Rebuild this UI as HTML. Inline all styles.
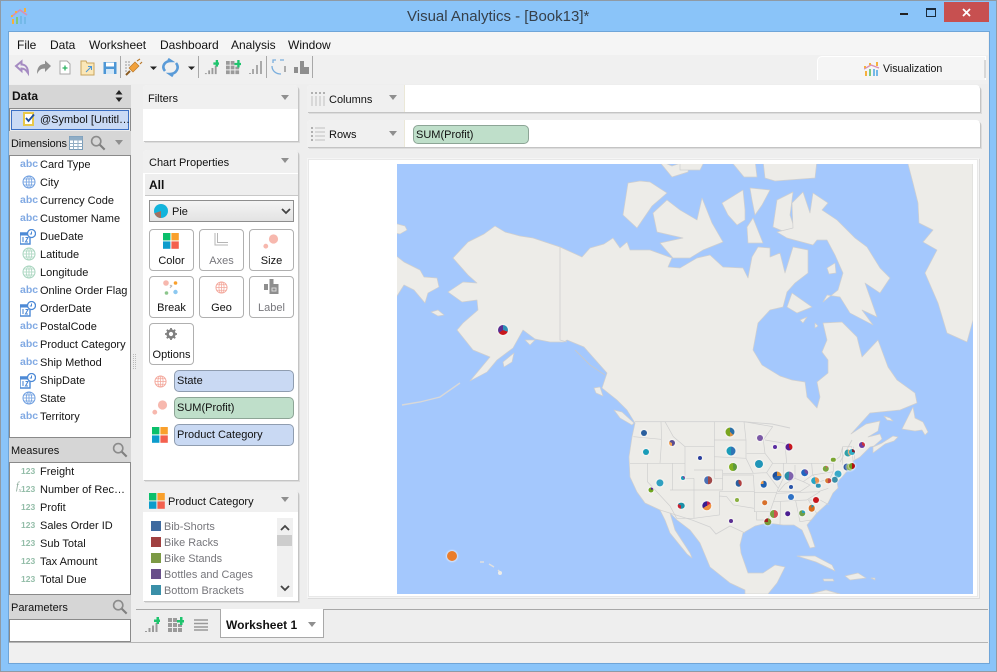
<!DOCTYPE html>
<html><head><meta charset="utf-8"><title>Visual Analytics</title>
<style>
html,body{margin:0;padding:0;width:997px;height:672px;overflow:hidden;background:#8ac4f9}
body{position:relative;font:12px/16px "Liberation Sans",sans-serif;color:#111}
div,span,svg,b.p{position:absolute}
.t{white-space:nowrap}
.hd{background:#d6d6d6}
.list{background:#fff;border:1px solid #8a8a8a;box-sizing:border-box}
.r{position:absolute;left:40px;height:18px;line-height:18px;margin-top:1px;font-size:11px;white-space:nowrap;color:#141414}
.abc{position:absolute;left:20px;color:#80a9e3;font-size:10.5px;font-weight:bold;height:18px;line-height:18px;white-space:nowrap}
.n{position:absolute;left:21px;color:#93bda8;font-size:8.5px;font-weight:bold;height:18px;line-height:18px;white-space:nowrap}
.card{background:#fff;box-shadow:1px 1px 0 #c4c4c4,2px 2px 0 #dcdcdc;border-radius:4px 4px 0 0}
.chd{background:#f0f0f0;border-radius:4px 4px 0 0}
.tri{width:0;height:0;border-left:4.5px solid transparent;border-right:4.5px solid transparent;border-top:5px solid #8f8f8f}
.btn{width:43px;height:40px;background:#fff;border:1px solid #b0b0b0;border-radius:4px;text-align:center;font-size:11px}
.btn span{left:0;right:0;top:23px;text-align:center}
.pill{left:174px;width:118px;height:20px;border:1px solid #8f9db0;border-radius:5px;line-height:21px;font-size:11px;text-indent:2px;white-space:nowrap}
.blue{background:#c9d9f3}.grn{background:#bfdfca;border-color:#8da596}
.sw{left:151px;width:10px;height:10px}
.lg{left:164px;font-size:10.9px;color:#77777c;white-space:nowrap;margin-top:1px}
.h{font-size:11px}
.p{position:absolute;display:block;border-radius:50%;transform:translate(-50%,-50%);box-shadow:0 0 1.5px 1px rgba(255,255,255,.55)}
.sep{width:1px;height:22px;top:56px;background:#a8a8a8}
</style></head>
<body>
<svg width="0" height="0" style="position:absolute"><defs>
<symbol id="globe" viewBox="0 0 14 14"><circle cx="7" cy="7" r="6" fill="none" stroke="currentColor"/><ellipse cx="7" cy="7" rx="2.8" ry="6" fill="none" stroke="currentColor" stroke-width=".8"/><path d="M1 7H13M2 4H12M2 10H12M7 1V13" stroke="currentColor" stroke-width=".8" fill="none"/></symbol>
<symbol id="date" viewBox="0 0 16 16"><path d="M0 4H10V15H0Z" fill="#fff" stroke="#4d8ad6" stroke-width="1.4"/><path d="M0 4H10V6.5H0Z" fill="#4d8ad6"/><path d="M3 8V13M5.5 8.5H8L5.5 13H8" stroke="#4d8ad6" stroke-width="1.1" fill="none"/><circle cx="11.5" cy="4.5" r="4" fill="#fff" stroke="#4d8ad6" stroke-width="1.3"/><path d="M11.5 2.5V5H9.8" stroke="#4d8ad6" fill="none"/></symbol>
<symbol id="four" viewBox="0 0 16 16"><rect width="7.4" height="7.4" fill="#0bbf6b"/><rect x="8.4" width="7.4" height="7.4" fill="#f9a02c"/><rect y="8.4" width="7.4" height="7.4" fill="#0d9ccc"/><rect x="8.4" y="8.4" width="7.4" height="7.4" fill="#f4604e"/></symbol>
<symbol id="mag" viewBox="0 0 18 18"><circle cx="7" cy="7" r="5.2" fill="none" stroke="#8b8b8b" stroke-width="1.8"/><path d="M11 11L16.5 16.5" stroke="#7f7f7f" stroke-width="2.4"/></symbol>
<symbol id="size" viewBox="0 0 16 16"><circle cx="10.5" cy="5" r="4.6" fill="#f7b8ae"/><circle cx="2.8" cy="12.2" r="2.4" fill="#f7b8ae"/></symbol>
<symbol id="barsp" viewBox="0 0 16 16"><path d="M1 14h2v1H1zM4.500 11h2v4h-2zM8 8.500h2V15H8zM11.500 6h2v9h-2z" fill="#9a9a9a"/><path d="M10 2.500h2.500V0h2.500v2.500h1V5h-1v2h-2.500V5H10z" fill="#1fc46e"/></symbol>
<symbol id="gridp" viewBox="0 0 16 16"><path d="M0 1h4v4H0zM5 1h4v4H5zM0 6h4v4H0zM5 6h4v4H5zM0 11h4v4H0zM5 11h4v4H5zM10 11h4v4h-4zM10 7h4v3h-4z" fill="#9a9a9a"/><path d="M9 3h3V0h2.500v3H17v2.500h-2.500V8H12V5.500H9z" fill="#1fc46e"/></symbol>
</defs></svg>

<!-- window chrome -->
<div style="left:0;top:0;width:995px;height:670px;border:1px solid #8f9aa5"></div>
<svg style="left:10px;top:7px" width="18" height="18" viewBox="0 0 18 18"><path d="M1 10L6 6L10 3L17 8" stroke="#d98fb5" stroke-width="1.6" fill="none"/><path d="M1 8h2v2H1zM5 4h2v2H5zM14 1h2v4h-2z" fill="#f5b13d"/><path d="M2 12h2v5H2z" fill="#f5b13d"/><path d="M6 10h2v7H6z" fill="#7fc97f"/><path d="M10 9h2v8h-2z" fill="#74b9e8"/><path d="M14 10h2v7h-2z" fill="#74b9e8"/></svg>
<div class="t" style="left:407px;top:7px;font-size:15px;line-height:20px;color:#36404a">Visual Analytics - [Book13]*</div>
<div style="left:900px;top:13px;width:8px;height:2px;background:#222"></div>
<div style="left:926px;top:8px;width:8px;height:6px;border:1px solid #1a2a3a;border-top:2px solid #1a2a3a"></div>
<div style="left:944px;top:2px;width:45px;height:20px;background:#c75050"></div>
<svg style="left:962px;top:8px" width="9" height="9"><path d="M1 1L8 8M8 1L1 8" stroke="#fff" stroke-width="1.8"/></svg>

<div style="left:8px;top:31px;width:980px;height:631px;border:1px solid #6fa5d8;background:#eee;box-sizing:content-box"></div>
<div style="left:9px;top:32px;width:979px;height:23px;background:#f5f5f5"></div>
<div style="left:9px;top:55px;width:979px;height:29px;background:#f0f0f0"></div>
<div class="t" style="left:17px;top:37px;font-size:12px">File</div>
<div class="t" style="left:50px;top:37px;font-size:12px">Data</div>
<div class="t" style="left:89px;top:37px;font-size:12px">Worksheet</div>
<div class="t" style="left:160px;top:37px;font-size:12px">Dashboard</div>
<div class="t" style="left:231px;top:37px;font-size:12px">Analysis</div>
<div class="t" style="left:288px;top:37px;font-size:12px">Window</div>

<!-- toolbar -->
<svg style="left:13px;top:58px" width="310" height="20" viewBox="0 0 310 20">
<path d="M3 8L8.500 3.500V6.500C12 6.500 15 9 15 15C13 12 11.500 10.500 8.500 10.500V13Z" fill="none" stroke="#a58bc2" stroke-width="2"/>
<path d="M38 8L32 2.500V6C28 6 24 8 24 16C26 12 28 10.500 32 10.500V14Z" fill="#8f8f8f"/>
<path d="M47 3h7l3 3v10H47z" fill="#fff" stroke="#a9a9a9"/><path d="M49.500 10h5M52 7.500v5" stroke="#2bb260" stroke-width="1.300"/>
<path d="M68 5V3h5l1 2h7v12H68z" fill="#fbe7b8" stroke="#c9a45c"/><path d="M73 14L78 9M75 8.500h3.500V12" stroke="#4a95d8" fill="none"/>
<path d="M90.500 4h13v12h-13z" fill="#4d97d6"/><path d="M93 4.500h8v4h-8z" fill="#fff"/><path d="M93 11h8v5h-8z" fill="#d5e8f7"/>
<path d="M113 3v12M116 3v6" stroke="#9a9a9a" stroke-dasharray="2 1"/><path d="M113 17L117 13" stroke="#8a5a20" stroke-width="2"/><path d="M116 10L122 4L126 8L120 14Z" fill="#f2a23c" stroke="#b8782a" stroke-width=".7"/><path d="M124 3L127 1M127 6L129 4" stroke="#b8782a" stroke-width="1.200"/>
<path d="M137 8.500h7l-3.500 3.500z" fill="#222"/>
<path d="M152 13C148 8 152 3 158 3L155 1M163 5C167 10 163 16 157 16L160 18" fill="none" stroke="#5a9bd8" stroke-width="2.600"/>
<path d="M175 8.500h7l-3.500 3.500z" fill="#222"/>
<use href="#barsp" x="191" y="2" width="15" height="15"/>
<use href="#gridp" x="213" y="2" width="15" height="15"/>
<path d="M236 15h2v1h-2zM239 11h2v5h-2zM243 7h2v9h-2zM247 3h2v13h-2z" fill="#a9a9a9"/>
<path d="M260 5V2h3M267 2h4M259 8c0 5 4 8 9 8" fill="none" stroke="#7aaedd" stroke-width="1.300"/><path d="M272 8v6" stroke="#888" stroke-width="1.300"/>
<path d="M281 9h4v6h-4zM287 3h4v6h5v7h-9z" fill="#8e8e8e"/>
</svg>
<div class="sep" style="left:120px"></div><div class="sep" style="left:198px"></div><div class="sep" style="left:266px"></div><div class="sep" style="left:312px"></div>

<!-- visualization tab -->
<div style="left:817px;top:56px;width:167px;height:23px;background:#f5f5f5;border:1px solid #fff;border-bottom:0;border-radius:5px 0 0 0"></div>
<div style="left:984px;top:60px;width:2px;height:18px;background:#d8d8d8"></div>
<svg style="left:864px;top:62px" width="16" height="14" viewBox="0 0 16 14"><path d="M0 7L7 3L15 6" stroke="#d98fb5" stroke-width="1.400" fill="none"/><path d="M0 4h2v2H0zM5 1h2v2H5zM12 0h2v4h-2zM1 9h2v5H1z" fill="#f5b13d"/><path d="M5 7h2v7H5z" fill="#7fc97f"/><path d="M9 7h2v7H9zM12 8h2v6h-2z" fill="#74b9e8"/></svg>
<div class="t" style="left:883px;top:61px;font-size:10.6px">Visualization</div>

<!-- left panel -->
<div style="left:9px;top:85px;width:122px;height:23px;background:#d6d6d6"></div>
<div class="t" style="left:12px;top:88px;font-weight:bold;font-size:12px">Data</div>
<svg style="left:115px;top:90px" width="8" height="12"><path d="M4 0L7.500 4.500H.5zM4 12L.5 7.500H7.500z" fill="#222"/></svg>
<div style="left:9px;top:108px;width:120px;height:22px;border:1px solid #8a8a8a;background:#eee"></div>
<div style="left:11px;top:110px;width:116px;height:18px;background:#c9daf5;border:1px solid #3a6fc4"></div>
<svg style="left:23px;top:112px" width="13" height="14"><path d="M1 1h9v12H1z" fill="#fff" stroke="#e8c84a" stroke-width="2"/><path d="M3 6l2.500 3L11 2.500" stroke="#1e4f9c" stroke-width="1.800" fill="none"/></svg>
<div class="t" style="left:40px;top:112px;font-size:11px">@Symbol [Untitl…</div>

<div class="hd" style="left:9px;top:131px;width:122px;height:24px"></div>
<div class="t" style="left:11px;top:136px;font-size:10.9px;letter-spacing:-.1px">Dimensions</div>
<svg style="left:69px;top:136px" width="14" height="14"><path d="M.5 .5h13v13H.5z" fill="#fff" stroke="#7a9cb8"/><path d="M.5 4h13M.5 7.500h13M.5 10.500h13M4.500 .5v13M9 .5v13" stroke="#93aec4"/><path d="M.5 .5h13v3H.5z" fill="#8fadc6"/></svg>
<svg style="left:90px;top:135px" width="16" height="16"><use href="#mag" width="16" height="16"/></svg>
<div class="tri" style="left:115px;top:140px"></div>

<div class="list" style="left:9px;top:155px;width:122px;height:283px"></div>
<div style="left:0;top:0">
<span class="abc" style="top:155px">abc</span><span class="r" style="top:155px">Card Type</span>
<svg style="left:22px;top:175px;color:#6e9ee0" width="14" height="14"><use href="#globe" width="14" height="14"/></svg><span class="r" style="top:173px">City</span>
<span class="abc" style="top:191px">abc</span><span class="r" style="top:191px">Currency Code</span>
<span class="abc" style="top:209px">abc</span><span class="r" style="top:209px">Customer Name</span>
<svg style="left:20px;top:229px" width="16" height="16"><use href="#date" width="16" height="16"/></svg><span class="r" style="top:227px">DueDate</span>
<svg style="left:22px;top:247px;color:#a8d5bf" width="14" height="14"><use href="#globe" width="14" height="14"/></svg><span class="r" style="top:245px">Latitude</span>
<svg style="left:22px;top:265px;color:#a8d5bf" width="14" height="14"><use href="#globe" width="14" height="14"/></svg><span class="r" style="top:263px">Longitude</span>
<span class="abc" style="top:281px">abc</span><span class="r" style="top:281px">Online Order Flag</span>
<svg style="left:20px;top:301px" width="16" height="16"><use href="#date" width="16" height="16"/></svg><span class="r" style="top:299px">OrderDate</span>
<span class="abc" style="top:317px">abc</span><span class="r" style="top:317px">PostalCode</span>
<span class="abc" style="top:335px">abc</span><span class="r" style="top:335px">Product Category</span>
<span class="abc" style="top:353px">abc</span><span class="r" style="top:353px">Ship Method</span>
<svg style="left:20px;top:373px" width="16" height="16"><use href="#date" width="16" height="16"/></svg><span class="r" style="top:371px">ShipDate</span>
<svg style="left:22px;top:391px;color:#6e9ee0" width="14" height="14"><use href="#globe" width="14" height="14"/></svg><span class="r" style="top:389px">State</span>
<span class="abc" style="top:407px">abc</span><span class="r" style="top:407px">Territory</span>
</div>

<div class="hd" style="left:9px;top:438px;width:122px;height:24px"></div>
<div class="t h" style="left:11px;top:443px">Measures</div>
<svg style="left:112px;top:442px" width="16" height="16"><use href="#mag" width="16" height="16"/></svg>
<div class="list" style="left:9px;top:462px;width:122px;height:133px"></div>
<div style="left:0;top:0">
<span class="n" style="top:462px">123</span><span class="r" style="top:462px">Freight</span>
<span class="n" style="top:480px">123</span><span class="r" style="top:480px">Number of Rec…</span>
<span class="t" style="left:16px;top:480px;font:italic 10px/14px 'Liberation Serif',serif;color:#8aa898">f<sub style="font-size:6px">x</sub></span>
<span class="n" style="top:498px">123</span><span class="r" style="top:498px">Profit</span>
<span class="n" style="top:516px">123</span><span class="r" style="top:516px">Sales Order ID</span>
<span class="n" style="top:534px">123</span><span class="r" style="top:534px">Sub Total</span>
<span class="n" style="top:552px">123</span><span class="r" style="top:552px">Tax Amount</span>
<span class="n" style="top:570px">123</span><span class="r" style="top:570px">Total Due</span>
</div>
<div class="hd" style="left:9px;top:595px;width:122px;height:24px"></div>
<div class="t h" style="left:11px;top:600px">Parameters</div>
<svg style="left:112px;top:599px" width="16" height="16"><use href="#mag" width="16" height="16"/></svg>
<div class="list" style="left:9px;top:619px;width:122px;height:23px"></div>
<svg style="left:133px;top:354px" width="3" height="16"><path d="M.5 0v16M2.500 0v16" stroke="#bbb" stroke-dasharray="1 1"/></svg>

<!-- filters -->
<div class="card" style="left:143px;top:85px;width:155px;height:56px"></div>
<div class="chd" style="left:143px;top:85px;width:155px;height:24px"></div>
<div class="t h" style="left:148px;top:91px">Filters</div>
<div class="tri" style="left:281px;top:95px"></div>

<!-- chart properties -->
<div class="card" style="left:143px;top:150px;width:155px;height:330px"></div>
<div class="chd" style="left:143px;top:150px;width:155px;height:23px"></div>
<div class="t h" style="left:149px;top:155px">Chart Properties</div>
<div class="tri" style="left:281px;top:158px"></div>
<div style="left:145px;top:174px;width:153px;height:21px;background:#eee;border-bottom:1px solid #c8c8c8"></div>
<div class="t" style="left:149px;top:177px;font-weight:bold;font-size:12px">All</div>
<div style="left:149px;top:200px;width:143px;height:20px;border:1px solid #8e8e8e;background:linear-gradient(#f4f4f4,#e3e3e3)"></div>
<svg style="left:154px;top:204px" width="14" height="14"><circle cx="7" cy="7" r="7" fill="#12b4dc"/><path d="M7 7V14A7 7 0 0 1 .4 9.300Z" fill="#a3705f"/></svg>
<div class="t" style="left:172px;top:204px;font-size:11px">Pie</div>
<svg style="left:281px;top:208px" width="10" height="7"><path d="M1 1L5 5L9 1" stroke="#444" stroke-width="1.800" fill="none"/></svg>

<div class="btn" style="left:149px;top:229px"><span>Color</span></div>
<svg style="left:163px;top:233px" width="16" height="16"><use href="#four" width="16" height="16"/></svg>
<div class="btn" style="left:199px;top:229px;color:#77777c"><span>Axes</span></div>
<svg style="left:214px;top:233px" width="14" height="14"><path d="M1 0V12H14M3.500 0V9.500H14" stroke="#b5b5b5" fill="none"/></svg>
<div class="btn" style="left:249px;top:229px"><span>Size</span></div>
<svg style="left:263px;top:234px" width="16" height="16"><use href="#size" width="16" height="16"/></svg>

<div class="btn" style="left:149px;top:276px"><span>Break</span></div>
<svg style="left:163px;top:280px" width="16" height="16"><circle cx="3" cy="3" r="2.800" fill="#f7b8ae"/><circle cx="12.500" cy="3" r="1.800" fill="#f9a02c"/><circle cx="3.500" cy="13" r="1.800" fill="#8cc68c"/><circle cx="12.500" cy="12" r="2.200" fill="#8cc8f0"/><path d="M7 5l2 2M9 5l-2 3" stroke="#bbb"/></svg>
<div class="btn" style="left:199px;top:276px"><span>Geo</span></div>
<svg style="left:215px;top:281px;color:#f3a79b" width="13" height="13"><use href="#globe" width="13" height="13"/></svg>
<div class="btn" style="left:249px;top:276px;color:#77777c"><span>Label</span></div>
<svg style="left:264px;top:279px" width="15" height="15"><path d="M0 5h4v6H0zM5.500 0h4v5h5v10h-9z" fill="#8e8e8e"/><path d="M8 9h4v3H8z" fill="none" stroke="#d8d8d8"/></svg>

<div class="btn" style="left:149px;top:323px"><span>Options</span></div>
<svg style="left:165px;top:328px" width="12" height="12" viewBox="0 0 12 12"><circle cx="6" cy="6" r="3.400" fill="none" stroke="#808080" stroke-width="2.600"/><path d="M6 0v2.500M6 9.500V12M0 6h2.500M9.500 6H12M1.800 1.800l1.800 1.800M8.400 8.400l1.800 1.800M1.800 10.200l1.800-1.800M8.400 3.600l1.800-1.800" stroke="#808080" stroke-width="1.800"/></svg>

<svg style="left:154px;top:375px;color:#f3a79b" width="13" height="13"><use href="#globe" width="13" height="13"/></svg>
<div class="pill blue" style="top:370px">State</div>
<svg style="left:152px;top:400px" width="16" height="16"><use href="#size" width="16" height="16"/></svg>
<div class="pill grn" style="top:397px">SUM(Profit)</div>
<svg style="left:152px;top:427px" width="16" height="16"><use href="#four" width="16" height="16"/></svg>
<div class="pill blue" style="top:424px">Product Category</div>

<!-- legend -->
<div class="card" style="left:143px;top:490px;width:155px;height:111px"></div>
<div class="chd" style="left:143px;top:490px;width:155px;height:22px"></div>
<svg style="left:149px;top:493px" width="16" height="16"><use href="#four" width="16" height="16"/></svg>
<div class="t h" style="left:168px;top:494px">Product Category</div>
<div class="tri" style="left:281px;top:497px"></div>
<div class="sw" style="top:521px;background:#3f6a9f"></div><div class="lg" style="top:518px">Bib-Shorts</div>
<div class="sw" style="top:537px;background:#a04040"></div><div class="lg" style="top:534px">Bike Racks</div>
<div class="sw" style="top:553px;background:#7c9a45"></div><div class="lg" style="top:550px">Bike Stands</div>
<div class="sw" style="top:569px;background:#684f8a"></div><div class="lg" style="top:566px">Bottles and Cages</div>
<div class="sw" style="top:585px;background:#3a8fa8"></div><div class="lg" style="top:582px">Bottom Brackets</div>
<div style="left:277px;top:518px;width:16px;height:79px;background:#f0f0f0"></div>
<div style="left:277px;top:535px;width:15px;height:11px;background:#cdcdcd"></div>
<svg style="left:280px;top:524px" width="10" height="7"><path d="M1 6L5 2L9 6" stroke="#444" stroke-width="1.800" fill="none"/></svg>
<svg style="left:280px;top:585px" width="10" height="7"><path d="M1 1L5 5L9 1" stroke="#444" stroke-width="1.800" fill="none"/></svg>

<!-- shelves -->
<div class="card" style="left:307px;top:85px;width:673px;height:27px"></div>
<div style="left:307px;top:85px;width:97px;height:27px;background:#f0f0f0;border-right:1px solid #ebe8d8;border-radius:4px 0 0 0"></div>
<svg style="left:311px;top:92px" width="15" height="14"><path d="M1 0v2M5 0v2M9 0v2M13 0v2" stroke="#9a9a9a" stroke-width="1.500"/><path d="M1 4v10M5 4v10M9 4v10M13 4v10" stroke="#d0d0d0" stroke-width="1.500"/></svg>
<div class="t h" style="left:329px;top:92px">Columns</div>
<div class="tri" style="left:389px;top:95px"></div>
<div class="card" style="left:307px;top:120px;width:673px;height:27px"></div>
<div style="left:307px;top:120px;width:97px;height:27px;background:#f0f0f0;border-right:1px solid #ebe8d8;border-radius:4px 0 0 0"></div>
<svg style="left:311px;top:127px" width="15" height="15"><path d="M0 1h2M0 5h2M0 9h2M0 13h2" stroke="#9a9a9a" stroke-width="1.500"/><path d="M4 1h10M4 5h10M4 9h10M4 13h10" stroke="#d0d0d0" stroke-width="1.500"/></svg>
<div class="t h" style="left:329px;top:127px">Rows</div>
<div class="tri" style="left:389px;top:131px"></div>
<div class="pill grn" style="left:413px;top:125px;width:114px;height:17px;line-height:18px">SUM(Profit)</div>

<!-- map card -->
<div style="left:307px;top:158px;width:672px;height:440px;background:#fff;border:1px solid #f5f5f5;box-sizing:border-box;box-shadow:1px 1px 0 #dcdcdc;outline:1px solid #e8e8e8;outline-offset:-2px"></div>
<svg style="left:397px;top:164px" width="576" height="430" viewBox="397 164 576 430">
<rect x="397" y="164" width="576" height="430" fill="#a4c8fd"/>
<g fill="#edece8" stroke="#cfcfcf" stroke-width=".7" stroke-linejoin="round" style="filter:blur(.25px)">
<!-- mainland -->
<path d="M453 258L468 242L484 234L495 226L505 232L520 236L533 238L560 247L582 257L590 248L604 244L613 238L620 248L627 242L630 250L650 250L672 258L668 267L680 268L697 258L710 255L723 267L743 268L748 278L752 257L758 247L770 248L770 257L780 253L785 273L793 247L808 250L808 273L795 283L787 292L783 307L770 310L758 323L753 350L762 365L780 376L792 380L805 382L807 397L817 408L820 397L817 382L828 373L828 360L822 352L827 340L823 323L842 322L857 337L862 357L878 340L888 367L897 380L915 393L917 403L900 410L870 413L851 434L866 424L880 421L878 431L868 437L880 434L882 439L874 446L870 447L860 457L853 461L853 466L848 470L843 476L837 482L838 488L833 493L828 503L817 513L807 525L811 535L815 547L810 548L802 530L794 525L783 525L767 523L755 526L743 533L740 545L741 553L748 573L763 573L775 565L785 567L777 583L768 594L745 594L745 590L730 583L710 567L700 543L690 530L677 520L670 513L675 530L690 553L692 558L687 554L670 533L665 520L660 510L645 503L637 492L630 477L629 457L632 437L635 423L627 410L617 400L602 388L607 373L584 347L567 340L564 342L550 342L535 339L523 330L513 348L497 360L487 372L470 381L490 357L473 350L457 330L463 323L478 310L477 300L462 302L448 292L463 282L477 283L468 275Z"/>
<!-- Siberia -->
<path d="M390 251L404 262L420 270L424 277L437 278L439 287L428 293L425 303L414 290L404 285L397 296H390Z"/>
<path d="M390 222L405 226L407 230L400 234L390 232Z"/>
<path d="M431 312L438 310L444 315L438 316Z"/>
<!-- Greenland -->
<path d="M907 160L913 183L918 203L919 223L933 230L923 242L937 250L925 273L938 303L947 333L967 342L973 320V160Z"/>
<!-- Arctic islands -->
<path d="M628 183L640 181L650 182L667 193L652 206L637 228L623 215Z"/>
<path d="M658 160L672 166L690 160L688 172L672 177Z"/>
<path d="M667 200L653 213L657 232L683 238L660 243L673 258L690 258L703 250L723 242L712 223L702 198L697 220L680 210Z"/>
<path d="M680 170L700 170L705 160H680Z"/>
<path d="M730 160L744 177L757 177L755 160Z"/>
<path d="M763 160L765 178L775 181L815 178L817 160Z"/>
<path d="M722 203L743 190L745 210L745 220L737 225L728 215Z"/>
<path d="M750 188L770 190L762 205L755 215L752 200Z"/>
<path d="M747 227L753 218L763 243L748 243Z"/>
<path d="M773 227L777 200L793 192L790 215L795 230L785 232Z"/>
<path d="M792 203L803 192L810 213L813 193L828 203L822 210L837 220L855 238L867 247L880 268L890 278L880 293L865 283L877 317L862 310L873 325L850 313L840 297L827 295L823 302L838 290L843 273L835 255L827 240L817 240L813 245L787 238L777 232L793 228Z"/>
<path d="M787 307L792 293L812 307L797 313Z"/>
<path d="M827 268L835 263L836 273L829 274Z"/>
<path d="M800 320L807 317L803 323Z"/><path d="M815 323L818 326L815 328Z"/>
<!-- Newfoundland, NS -->
<path d="M913 407L902 429L915 431L922 430L925 435L928 432L923 422L915 418Z"/>
<path d="M873 453L885 444L894 441L898 437L893 436L882 443L873 447Z"/>
<path d="M884 416L890 418L893 421L887 420Z"/>
<!-- Caribbean -->
<path d="M797 557L815 557L832 566L835 572L816 563Z" transform="translate(0 -1)"/>
<path d="M845 576L858 573L866 578L850 580Z"/>
<path d="M823 579L833 579L834 581L824 581Z"/>
<path d="M871 578L875 578L875 580Z"/>
<path d="M810 594L826 590L840 594Z"/>
<!-- Vancouver + Haida -->
<path d="M614 410L622 412L634 423L632 425L620 418Z"/>
<path d="M594 388L600 387L603 396L596 393Z"/>
<path d="M503 362L514 353L512 362L504 367Z"/>
<path d="M525 340L535 340L530 345Z"/>
</g>
<g fill="none" stroke="#d2d2d2" stroke-width=".9">
<path d="M560 247V340L567 342"/>
<path d="M635 421.700H743L772 424L790 428"/>
<path d="M840 462L852 440"/>
<path d="M660 510L692 520L710 527L716 534L730 526L745 533"/>
<path d="M575 350L590 365L605 375" stroke="#c5c8cc"/>
</g>
<g transform="translate(620 410) scale(.3333)" fill="none" stroke="#cecece" stroke-width="2">
<path d="M40 80L123 88M123 35L125 90L120 160M30 160H157M82 160V215L150 288M157 160V240M150 240H222M222 205V325M150 288L170 325H222M135 35L160 80L195 110H283M195 110V205H222M195 160H157M222 180H308M222 240H308M308 180V240M283 35V205M283 90H378M283 140L378 145M283 205H308M372 35L378 90L378 145L400 190H308M308 195H400L403 245M298 245H403V295L340 285L320 260L298 258M298 245V315L222 325M380 130H435L458 160L440 188L400 190M372 35L458 50L430 90L435 130M435 90L495 100L500 160M458 160H525L575 160M490 160V205L475 235M440 188L475 235L470 248H403M403 248V305H450L470 248M410 305V330L445 330L450 305M525 165V205L495 222L475 245H540L570 225L550 215L525 205M550 215L578 195L575 160H640V185L578 195M640 155L660 140L668 110L695 110L700 160M470 250L595 245L625 235M460 275L560 270L600 245M482 275L480 345M527 272L540 335L575 330L590 310L565 270M565 270H600L628 285M578 195L600 215L630 205L640 185M668 110V165M700 110L705 150"/>
</g>
<path d="M402 405L420 402L440 397L460 383" fill="none" stroke="#d8d8d8" stroke-width="1.400"/>
<path d="M480 562L484 562M489 564L494 567M498 570L500 572" fill="none" stroke="#e0e0e0" stroke-width="1.400"/><circle cx="500" cy="573" r="2" fill="#edece8"/>
</svg>

<!-- pies -->
<div style="left:0;top:0;width:997px;height:672px;overflow:hidden;pointer-events:none">
<i class="p" style="left:502.700px;top:330.300px;width:10px;height:10px;background:conic-gradient(#2f8fb5 0 110deg,#c8171d 110deg 235deg,#5a2d91 235deg)"></i>
<i class="p" style="left:452px;top:556.300px;width:10px;height:10px;background:#ea7d2b"></i>
<i class="p" style="left:644.300px;top:432.700px;width:6px;height:6px;background:#2a5f9e"></i>
<i class="p" style="left:672.300px;top:443.300px;width:6px;height:6px;background:conic-gradient(#5a4d91 0 180deg,#f0a050 180deg 300deg,#5a4d91 300deg)"></i>
<i class="p" style="left:645.700px;top:452px;width:6px;height:6px;background:#1a9cb8"></i>
<i class="p" style="left:700px;top:458.300px;width:4px;height:4px;background:#2a3f9e"></i>
<i class="p" style="left:730.300px;top:431.700px;width:9px;height:9px;background:conic-gradient(#2a6fa5 0 130deg,#d89040 130deg 180deg,#7aa51f 180deg)"></i>
<i class="p" style="left:730.700px;top:451px;width:9px;height:9px;background:conic-gradient(#2f75b5 0 180deg,#1a9cb8 180deg)"></i>
<i class="p" style="left:733px;top:466.700px;width:8px;height:8px;background:conic-gradient(#5d9a3a 0 170deg,#83b021 170deg)"></i>
<i class="p" style="left:759.700px;top:438px;width:6px;height:6px;background:#7a58a5"></i>
<i class="p" style="left:775.300px;top:447px;width:4px;height:4px;background:#5a2da1"></i>
<i class="p" style="left:789.300px;top:446.700px;width:7px;height:7px;background:conic-gradient(#c8171d 0 150deg,#5a1d91 150deg)"></i>
<i class="p" style="left:759.300px;top:464px;width:8px;height:8px;background:#2095b8"></i>
<i class="p" style="left:776.700px;top:476.300px;width:9px;height:9px;background:conic-gradient(#d89040 0 90deg,#2a65b0 90deg 250deg,#1f4f9a 250deg)"></i>
<i class="p" style="left:788.700px;top:476.300px;width:9px;height:9px;background:conic-gradient(#7f62ad 0 190deg,#2b8fa8 190deg)"></i>
<i class="p" style="left:804.700px;top:472.700px;width:7.600px;height:7.600px;background:conic-gradient(#6a4da1 0 120deg,#2065c0 120deg)"></i>
<i class="p" style="left:825.700px;top:468.700px;width:6.400px;height:6.400px;background:conic-gradient(#d06060 0 40deg,#7aa53f 40deg)"></i>
<i class="p" style="left:833.300px;top:459.700px;width:4.400px;height:4.400px;background:#7aa52f"></i>
<i class="p" style="left:862px;top:445px;width:6px;height:6px;background:conic-gradient(#c83040 0 120deg,#6a3da1 120deg)"></i>
<i class="p" style="left:847.700px;top:452.700px;width:7px;height:7px;background:conic-gradient(#e08030 0 150deg,#2fa0a8 150deg)"></i>
<i class="p" style="left:851.700px;top:452.300px;width:6px;height:6px;background:conic-gradient(#7a2030 0 100deg,#2fb0c8 100deg)"></i>
<i class="p" style="left:838px;top:474px;width:7px;height:7px;background:#38a8c8"></i>
<i class="p" style="left:835px;top:480px;width:6.400px;height:6.400px;background:#3a8fa8"></i>
<i class="p" style="left:846.700px;top:466.700px;width:7px;height:7px;background:conic-gradient(#4fa0b0 0 180deg,#2a55a0 180deg)"></i>
<i class="p" style="left:849.700px;top:466.500px;width:7px;height:7px;background:conic-gradient(#f0a050 0 100deg,#90b050 100deg)"></i>
<i class="p" style="left:852.200px;top:466.300px;width:6px;height:6px;background:conic-gradient(#b01010 0 180deg,#6a9a20 180deg)"></i>
<i class="p" style="left:828.300px;top:480.700px;width:5.600px;height:5.600px;background:conic-gradient(#c04040 0 180deg,#d87a30 180deg)"></i>
<i class="p" style="left:815px;top:480.700px;width:7.600px;height:7.600px;background:conic-gradient(#e89050 0 170deg,#25a5c5 170deg)"></i>
<i class="p" style="left:818.300px;top:486px;width:4.400px;height:4.400px;background:#2f95b5"></i>
<i class="p" style="left:791.300px;top:486.700px;width:4px;height:4px;background:#2a55a8"></i>
<i class="p" style="left:763.700px;top:484.300px;width:6.600px;height:6.600px;background:conic-gradient(#1f60b0 0 270deg,#f0a050 270deg)"></i>
<i class="p" style="left:738.700px;top:483px;width:6.600px;height:6.600px;background:conic-gradient(#b04040 0 150deg,#2a5fa0 150deg)"></i>
<i class="p" style="left:708.300px;top:480.300px;width:7.600px;height:7.600px;background:conic-gradient(#a04848 0 180deg,#4a70b5 180deg)"></i>
<i class="p" style="left:683.300px;top:477.700px;width:4px;height:4px;background:conic-gradient(#7a50a0 0 120deg,#1a9cb8 120deg)"></i>
<i class="p" style="left:660.300px;top:483px;width:7.200px;height:7.200px;background:#30a0c0"></i>
<i class="p" style="left:650.700px;top:489.700px;width:5px;height:5px;background:conic-gradient(#5a1d91 0 70deg,#6ea51f 70deg)"></i>
<i class="p" style="left:681.300px;top:505.700px;width:6.600px;height:6.600px;background:conic-gradient(#1a90a8 0 180deg,#c82030 180deg 300deg,#1a90a8 300deg)"></i>
<i class="p" style="left:706.700px;top:505.700px;width:9.400px;height:9.400px;background:conic-gradient(#c02050 0 60deg,#f09040 60deg 240deg,#3a1d91 240deg)"></i>
<i class="p" style="left:737px;top:499.700px;width:4px;height:4px;background:#8ab040"></i>
<i class="p" style="left:731.300px;top:520.700px;width:4px;height:4px;background:#5a2d91"></i>
<i class="p" style="left:764.700px;top:502.700px;width:5.600px;height:5.600px;background:#d8702a"></i>
<i class="p" style="left:790.700px;top:497px;width:6px;height:6px;background:#2f72c5"></i>
<i class="p" style="left:816.300px;top:500.300px;width:6px;height:6px;background:#c8171d"></i>
<i class="p" style="left:811.700px;top:508.300px;width:6.600px;height:6.600px;background:conic-gradient(#2a8fa8 0 40deg,#d8691a 40deg)"></i>
<i class="p" style="left:802px;top:513.300px;width:5.600px;height:5.600px;background:conic-gradient(#2a9fb8 0 80deg,#6e9f4a 80deg)"></i>
<i class="p" style="left:787.700px;top:513.700px;width:5.600px;height:5.600px;background:#4a1d91"></i>
<i class="p" style="left:774px;top:513.700px;width:8px;height:8px;background:conic-gradient(#d05050 0 180deg,#78a040 180deg)"></i>
<i class="p" style="left:768px;top:521.700px;width:7.400px;height:7.400px;background:conic-gradient(#7a9a3a 0 270deg,#a02020 270deg)"></i>
</div>

<!-- bottom tabs -->
<div style="left:136px;top:609px;width:852px;height:1px;background:#a8a8a8"></div>
<svg style="left:144px;top:617px" width="16" height="16"><use href="#barsp" width="16" height="16"/></svg>
<svg style="left:168px;top:617px" width="16" height="16"><use href="#gridp" width="16" height="16"/></svg>
<svg style="left:194px;top:619px" width="14" height="12"><path d="M0 1h14M0 4.500h14M0 8h14M0 11h14" stroke="#999" stroke-width="1.600"/></svg>
<div style="left:220px;top:609px;width:102px;height:28px;background:#fff;border:1px solid #a8a8a8;border-top:0"></div>
<div class="t" style="left:226px;top:617px;font-weight:bold;font-size:12px">Worksheet 1</div>
<div class="tri" style="left:308px;top:622px"></div>
<div style="left:9px;top:642px;width:979px;height:1px;background:#b5b5b5"></div>
<div style="left:9px;top:643px;width:979px;height:19px;background:#f0f0f0"></div>
</body></html>
